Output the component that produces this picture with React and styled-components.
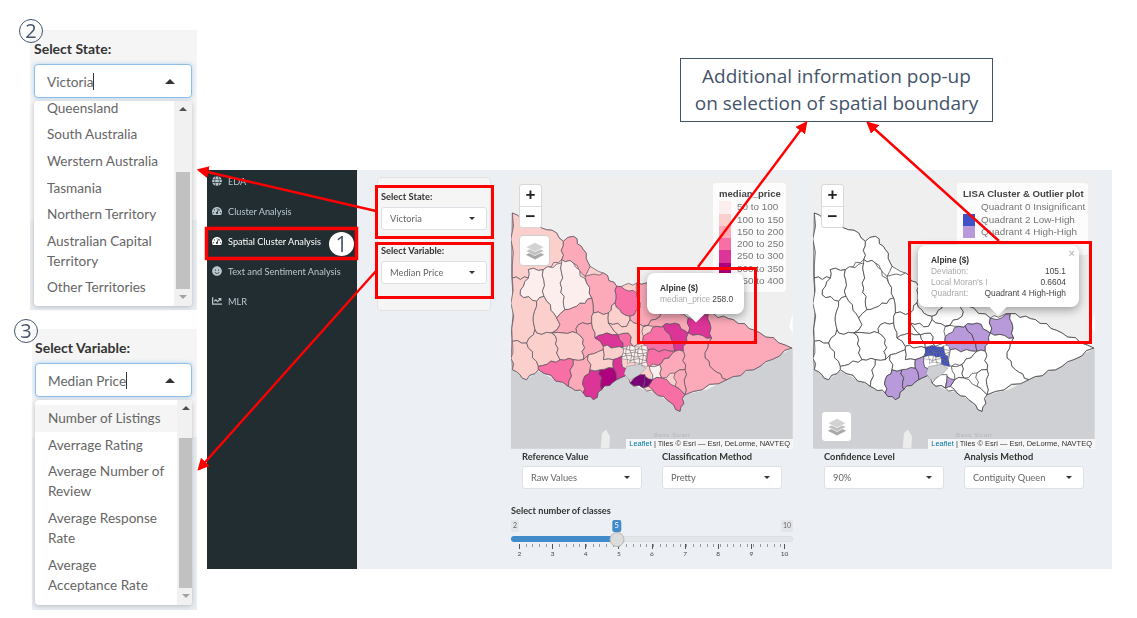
import React from "react";
import styled, { createGlobalStyle } from "styled-components";
import { FaGlobe, FaTachometerAlt, FaSmile, FaChartLine } from "react-icons/fa";

const Global = createGlobalStyle`
  html, body { margin: 0; padding: 0; background: #fff; }
  body { font-family: "Lato", "Noto Sans", sans-serif; }
`;

const Page = styled.div`
  position: relative;
  width: 1137px;
  height: 618px;
  overflow: hidden;
  display: flex;
  background: #fff;
`;
const LeftColumn = styled.div`
  width: 207px;
  flex: none;
  display: flex;
  flex-direction: column;
`;
const RightColumn = styled.div`
  flex: 1;
  display: flex;
  flex-direction: column;
`;
const Callout = styled.section`
  position: relative;
  margin: ${(p) => p.$margin};
  width: ${(p) => p.$width}px;
  height: ${(p) => p.$height}px;
  box-sizing: border-box;
  padding: 10px 5px 0 ${(p) => p.$pad}px;
  background: linear-gradient(#f5f5f5 0 ${(p) => p.$split}px, #e9edf2 ${(p) => p.$split}px);
  filter: blur(0.25px);
`;
const Step = styled.span`
  position: absolute;
  left: ${(p) => p.$x}px;
  top: ${(p) => p.$y}px;
  width: 24px;
  height: 24px;
  box-sizing: border-box;
  border: 1px solid #44546a;
  border-radius: 50%;
  color: #44546a;
  background: transparent;
  font: 20px/22px "Open Sans", sans-serif;
  text-align: center;
`;
const CalloutLabel = styled.div`
  font-size: 14px;
  font-weight: 700;
  line-height: 17px;
  color: #333;
`;
const OpenSelect = styled.div`
  margin-top: 7px;
  height: 34px;
  box-sizing: border-box;
  border: 1px solid #8dbfe9;
  border-radius: 4px;
  background: #fff;
  box-shadow: 0 0 4px rgba(102, 175, 233, 0.5);
  display: flex;
  align-items: center;
  justify-content: space-between;
  padding: 0 16px 0 12px;
  color: #666;
  font-size: 13.6px;
`;
const Cursor = styled.i`
  display: inline-block;
  width: 1px;
  height: 17px;
  background: #333;
  vertical-align: -3px;
`;
const CaretUp = styled.span`
  width: 0;
  height: 0;
  border: 5px solid transparent;
  border-top: 0;
  border-bottom: 5px solid #333;
`;
const Dropdown = styled.div`
  margin-top: 3px;
  height: 205px;
  border-radius: 4px;
  background: #fff;
  box-shadow: 0 1px 5px rgba(0, 0, 0, 0.22);
  display: flex;
  overflow: hidden;
`;
const OptionList = styled.div`
  flex: 1;
  margin-top: ${(p) => p.$offset}px;
`;
const Option = styled.div`
  padding: 3.3px 13px;
  line-height: 20px;
  font-size: 13.6px;
  color: #666;
  white-space: pre;
  background: ${(p) => (p.$active ? "#f5f5f5" : "transparent")};
`;
const Scrollbar = styled.div`
  width: 18px;
  flex: none;
  background: #f1f1f1;
  display: flex;
  flex-direction: column;
  align-items: center;
  padding: 6px 0 7px;
  box-sizing: border-box;
`;
const ScrollThumb = styled.div`
  width: 14px;
  flex: 1;
  margin: ${(p) => p.$top}px 0 6px;
  background: #c1c1c1;
`;
const ScrollUp = styled.span`
  border: 4px solid transparent;
  border-top: 0;
  border-bottom: 4px solid #505050;
`;
const ScrollDown = styled.span`
  border: 4px solid transparent;
  border-bottom: 0;
  border-top: 4px solid #a3a3a3;
`;
const Note = styled.div`
  align-self: flex-start;
  margin: 58px 0 48px 473px;
  width: 313px;
  height: 64px;
  box-sizing: border-box;
  border: 1px solid #44546a;
  display: flex;
  align-items: center;
  justify-content: center;
  text-align: center;
  color: #44546a;
  font: 19px/27px "Open Sans", sans-serif;
  white-space: nowrap;
`;
const Dashboard = styled.div`
  width: 905px;
  height: 399px;
  display: flex;
  overflow: hidden;
  filter: blur(0.3px);
`;
const Sidebar = styled.nav`
  width: 150px;
  flex: none;
  background: #222d32;
  box-sizing: border-box;
  margin: 0;
  overflow: hidden;
`;
const SideItem = styled.div`
  height: 30px;
  display: flex;
  align-items: center;
  gap: 6px;
  padding-left: 5px;
  font-size: 9.2px;
  color: ${(p) => (p.$active ? "#fff" : "#b8c7ce")};
  &:first-child { margin-top: -4px; }
  svg { width: 10px; height: 10px; flex: none; }
`;
const Content = styled.main`
  flex: 1;
  background: #ecf0f5;
  display: flex;
  gap: 20px;
  padding: 7px 17px 0 20px;
  align-items: flex-start;
`;
const Well = styled.aside`
  width: 114px;
  height: 134px;
  flex: none;
  box-sizing: border-box;
  background: #f5f5f5;
  border: 1px solid #e3e3e3;
  border-radius: 4px;
  padding: 13px 3px;
`;
const MapColumn = styled.div`
  width: 282px;
  flex: none;
`;
const WellLabel = styled.div`
  font-size: 9.3px;
  font-weight: 700;
  color: #333;
  line-height: 12px;
  margin-top: ${(p) => p.$gap || 0}px;
`;
const ClosedSelect = styled.div`
  margin-top: ${(p) => p.$top || 4}px;
  height: 23px;
  box-sizing: border-box;
  background: #fff;
  border: 1px solid #dde1e5;
  border-radius: 3px;
  display: flex;
  align-items: center;
  justify-content: space-between;
  padding: 0 11px 0 8px;
  color: #666;
  font-size: 9.3px;
`;
const CaretDown = styled.span`
  border: 3.5px solid transparent;
  border-bottom: 0;
  border-top: 3.5px solid #333;
`;
const MapFrame = styled.div`
  position: relative;
  width: 282px;
  height: 272px;
  overflow: hidden;
  background: #efefef;
  svg.base { display: block; }
`;
const Zoom = styled.div`
  position: absolute;
  left: 8px;
  top: 7px;
  width: 21px;
  background: #fff;
  border: 1px solid #d8d8d8;
  border-radius: 3px;
  font: 700 17px/20px "Liberation Sans", sans-serif;
  color: #222;
  text-align: center;
`;
const ZoomBtn = styled.div`
  height: 20.5px;
  & + & { border-top: 1px solid #ddd; }
`;
const LayersBtn = styled.div`
  position: absolute;
  left: 8px;
  ${(p) => (p.$bottom ? "bottom: 7px;" : "top: 58px;")}
  width: 31px;
  height: 31px;
  box-sizing: border-box;
  background: #fff;
  border: 1px solid #d0d0d0;
  border-radius: 4px;
  display: flex;
  align-items: center;
  justify-content: center;
`;
const Legend = styled.div`
  position: absolute;
  right: 7px;
  top: 6px;
  width: ${(p) => p.$width}px;
  box-sizing: border-box;
  padding: 5px 6px 5px;
  background: rgba(255, 255, 255, 0.82);
  border-radius: 3px;
  font: 9.9px/12.25px "Liberation Sans", sans-serif;
  color: #777;
`;
const LegendTitle = styled.div`
  font-weight: 700;
  font-size: 9.6px;
  color: #444;
  margin-bottom: 1px;
  white-space: nowrap;
`;
const LegendRow = styled.div`
  display: flex;
  gap: 6px;
  white-space: nowrap;
`;
const Swatch = styled.i`
  width: 12px;
  height: 12.25px;
  flex: none;
  background: ${(p) => p.$c};
`;
const Popup = styled.div`
  position: absolute;
  left: ${(p) => p.$x}px;
  top: ${(p) => p.$y}px;
  width: ${(p) => p.$w}px;
  height: ${(p) => p.$h}px;
  box-sizing: border-box;
  padding: 10px 13px 0;
  background: #fff;
  border-radius: 8px;
  box-shadow: 0 3px 10px rgba(0, 0, 0, 0.35);
  font: 8.4px/11px "Liberation Sans", sans-serif;
  color: #444;
  &::after {
    content: "";
    position: absolute;
    left: ${(p) => p.$tip}px;
    bottom: -6px;
    width: 12px;
    height: 12px;
    background: #fff;
    transform: rotate(45deg);
  }
`;
const PopupTitle = styled.div`
  font-weight: 700;
  color: #333;
`;
const PopupRow = styled.div`
  display: flex;
  justify-content: ${(p) => (p.$tight ? "flex-start" : "space-between")};
  gap: 2px;
  white-space: nowrap;
`;
const PopupLabel = styled.span`
  color: #aaa;
`;
const PopupClose = styled.span`
  position: absolute;
  right: 4px;
  top: 2px;
  color: #c3c3c3;
  font: 700 11px/12px "Liberation Sans", sans-serif;
`;
const Attribution = styled.div`
  position: absolute;
  right: 0;
  bottom: 0;
  height: 10px;
  padding: 0 3px;
  background: rgba(255, 255, 255, 0.8);
  font: 7.5px/10px "Liberation Sans", sans-serif;
  color: #333;
  white-space: nowrap;
  b { font-weight: 400; color: #0078a8; }
`;
const Controls = styled.div`
  display: flex;
  gap: 20px;
  margin-top: 1px;
  padding-left: ${(p) => p.$pad}px;
`;
const Control = styled.div`
  width: 120px;
`;
const ControlLabel = styled.div`
  font-size: 9.3px;
  font-weight: 700;
  line-height: 13px;
  color: #333;
`;
const SliderTitle = styled.div`
  margin-top: 16px;
  font-size: 9.2px;
  font-weight: 700;
  line-height: 12px;
  color: #333;
`;
const Slider = styled.div`
  position: relative;
  margin-top: 3px;
`;
const Bounds = styled.div`
  display: flex;
  justify-content: space-between;
  height: 12px;
`;
const Bound = styled.span`
  background: #e3e5e8;
  border-radius: 2px;
  padding: 0 2px;
  font-size: 7px;
  line-height: 11px;
  color: #666;
`;
const Current = styled.span`
  position: absolute;
  top: 0;
  transform: translateX(-50%);
  background: #428bca;
  border-radius: 2px;
  padding: 0 2.5px;
  color: #fff;
  font-size: 7.5px;
  line-height: 12px;
`;
const Track = styled.div`
  position: relative;
  margin-top: 4px;
  height: 6px;
  border-radius: 3px;
  background: #e4e6e9;
  border: 1px solid #dcdfe3;
  box-sizing: border-box;
`;
const Fill = styled.div`
  position: absolute;
  left: -1px;
  top: -1px;
  bottom: -1px;
  background: #428bca;
  border-radius: 3px 0 0 3px;
`;
const Handle = styled.div`
  position: absolute;
  top: -5px;
  width: 15px;
  height: 15px;
  transform: translateX(-50%);
  background: #dcdcdc;
  border: 1px solid #b5b5b5;
  border-radius: 50%;
  box-sizing: border-box;
`;
const Scale = styled.div`
  display: flex;
  justify-content: space-between;
  margin: 2px 4px 0;
  background: repeating-linear-gradient(90deg, #9a9a9a 0 1px, transparent 1px 6.7px) 4px 0 / calc(100% - 8px) 3px no-repeat;
`;
const Tick = styled.div`
  width: 9px;
  text-align: center;
  font-size: 6.5px;
  line-height: 9px;
  color: #444;
  &::before {
    content: "";
    display: block;
    width: 1px;
    height: 5px;
    margin: 0 auto 0;
    background: #555;
  }
`;
const Overlay = styled.svg`
  position: absolute;
  left: 0;
  top: 0;
  pointer-events: none;
`;
const SidebarBadge = styled(Step)`
  border: none;
  background: #fff;
  font-size: 21px;
  line-height: 24px;
  width: 25px;
`;

const RDPU = ["#fdeeee", "#fbd0cc", "#fcaab9", "#f76fa5", "#dd3497", "#ae017e", "#7a0177"];
const Q4 = "#b899d9";
const Q2 = "#3f50c8";

const LAND =
  "457,130 500,150 545,175 590,190 610,215 640,200 670,240 690,290 730,310 770,350 830,340 860,340 900,400 985,445 1045,432 1120,450 1200,490 1295,535 1200,590 1100,630 975,675 960,725 920,690 885,670 850,655 810,640 805,610 770,630 725,660 700,690 670,670 625,650 535,600 500,630 457,600";

const REGIONS = [
  { p: "457,130 500,150 545,175 590,190 610,215 605,270 550,300 505,300 505,325 457,325", c: 1 },
  { p: "610,215 640,200 670,240 690,290 675,320 640,280 605,270", c: 2 },
  { p: "505,300 550,300 552,380 530,395 480,375 490,350 505,325", c: 0 },
  { p: "550,300 605,280 605,355 615,420 590,445 560,395 552,380", c: 0 },
  { p: "605,280 605,270 640,280 680,340 695,385 650,410 615,420 605,355", c: 0 },
  { p: "675,320 730,310 770,350 765,400 745,430 700,430 695,385 680,340", c: 2 },
  { p: "770,350 830,370 840,415 810,440 785,430 765,400", c: 3 },
  { p: "745,430 765,400 785,430 810,440 810,450 800,470 745,460", c: 1 },
  { p: "830,370 830,340 860,340 900,400 900,440 850,470 810,450 810,440 840,415", c: 2 },
  { p: "457,325 505,325 490,350 480,375 530,395 520,440 525,480 500,520 457,515", c: 1 },
  { p: "530,395 552,380 560,395 590,445 600,465 575,490 530,490 525,480 520,440", c: 1 },
  { p: "615,420 650,410 695,385 700,430 695,440 695,460 655,465 650,490 610,490 575,490 600,465 590,445", c: 2 },
  { p: "457,515 500,520 535,590 535,600 500,630 457,600", c: 1 },
  { p: "500,520 525,480 530,490 575,490 590,510 590,550 600,570 535,590", c: 1 },
  { p: "590,510 575,490 610,490 650,490 670,510 670,570 640,570 600,570 590,550", c: 1 },
  { p: "535,590 600,570 640,570 625,650 535,600", c: 3 },
  { p: "640,570 670,570 685,555 690,600 670,630 670,670 625,650", c: 2 },
  { p: "670,630 690,600 720,600 725,660 700,690 670,670", c: 4, l: Q4 },
  { p: "720,600 760,595 770,620 770,630 725,660", c: 5, l: Q4 },
  { p: "655,465 695,460 705,505 730,530 730,540 685,555 670,570 670,510 650,490", c: 2 },
  { p: "695,440 700,430 745,430 745,460 775,495 740,490 705,505 695,460", c: 1 },
  { p: "705,505 740,490 775,495 790,535 730,530", c: 4 },
  { p: "775,495 805,490 820,530 790,535", c: 3 },
  { p: "730,530 790,535 785,560 760,570 730,570 730,540", c: 1 },
  { p: "685,555 730,540 730,570 760,570 760,595 720,600 690,600", c: 1 },
  { p: "760,570 785,560 785,580 805,610 770,630 770,620 760,595", c: 4, l: Q4 },
  { p: "745,460 800,470 810,450 850,470 850,500 848,520 820,530 805,490 775,495", c: 1 },
  { p: "850,500 890,470 910,470 935,510 945,545 865,540 848,520", c: 3, l: Q4 },
  { p: "890,470 945,460 985,490 970,545 945,545 935,510 910,470", c: 4, l: Q4 },
  { p: "900,400 985,445 985,490 945,460 890,470 850,470 900,440", c: 2 },
  { p: "985,445 1005,450 1045,432 1055,505 985,490", c: 4, l: Q4 },
  { p: "1045,432 1120,450 1200,490 1295,535 1200,590 1100,630 1060,600 1035,565 1045,520 1055,505", c: 2 },
  { p: "985,490 1055,505 1045,520 1035,565 1060,600 1100,630 975,675 975,600 970,545", c: 2 },
  { p: "865,540 945,545 905,580 868,590 860,585", c: 3 },
  { p: "905,580 945,545 970,545 975,600 945,610 905,625 900,585", c: 2 },
  { p: "868,590 900,585 905,625 878,630", c: 0 },
  { p: "945,610 975,600 975,675 945,650", c: 2 },
  { p: "878,630 905,625 945,650 975,675 960,725 920,690 885,670 865,650", c: 3 },
  { p: "810,640 835,615 855,615 850,655", c: 6 },
  { p: "855,620 878,630 865,650 850,655", c: 6, l: Q4 },
];

// Subdivide each edge with a small offset seeded by the edge itself, so that
// neighbouring regions keep sharing a boundary and the lines look like rivers.
function wiggle(text) {
  const pts = text.split(" ").map((s) => s.split(",").map((n) => parseFloat(n)));
  const out = [];
  pts.forEach((a, i) => {
    const b = pts[(i + 1) % pts.length];
    out.push(a);
    const swap = a[0] > b[0] || (a[0] === b[0] && a[1] > b[1]);
    const u = swap ? b : a;
    const v = swap ? a : b;
    const len = Math.hypot(v[0] - u[0], v[1] - u[1]);
    if (len < 18) return;
    const seed = u[0] * 0.37 + u[1] * 0.71 + v[0] * 0.13 + v[1] * 0.53;
    const steps = Math.min(5, Math.floor(len / 12));
    const mid = [];
    for (let k = 1; k < steps; k++) {
      const t = k / steps;
      const n = Math.sin(seed + k * 2.4) * 4.5;
      mid.push([u[0] + (v[0] - u[0]) * t - ((v[1] - u[1]) / len) * n, u[1] + (v[1] - u[1]) * t + ((v[0] - u[0]) / len) * n]);
    }
    if (swap) mid.reverse();
    out.push(...mid);
  });
  return out.map((q) => q.map((n) => n.toFixed(1)).join(",")).join(" ");
}

const SHAPES = REGIONS.map((r) => ({ ...r, p: wiggle(r.p) }));
const LAND_SHAPE = wiggle(LAND);

// Melbourne's many small inner municipalities: an irregular mesh
const node = (i, j) => [
  (788 + i * 12 + Math.sin(i * 2.1 + j * 1.3) * 3).toFixed(1),
  (530 + j * 10 + Math.cos(i * 1.7 + j * 2.3) * 3).toFixed(1),
].join(",");
const CELLS = [];
for (let j = 0; j < 6; j++) {
  for (let i = 0; i < 6; i++) {
    if ((j === 5 && i < 3) || (j >= 4 && i === 0)) continue;
    const blue = (j <= 2 && i <= 4) || (i >= 4 && j >= 3);
    CELLS.push({ p: `${node(i, j)} ${node(i + 1, j)} ${node(i + 1, j + 1)} ${node(i, j + 1)}`, blue });
  }
}

const SEA =
  "453,597 500,630 535,605 625,650 670,670 700,690 725,660 770,630 805,610 790,580 840,575 860,590 875,630 850,650 810,640 850,660 885,670 920,690 960,725 975,675 1040,660 1100,630 1200,590 1298,535 1298,837 453,837";

function VictoriaMap({ lisa }) {
  return (
    <svg className="base" width="282" height="272" viewBox="453 22 846 816">
      <polygon points={SEA} fill="#cfd0d4" />
      <path d="M722 836 726 790 738 780 750 800 748 836Z M1090 836 1100 815 1115 836Z" fill="#ececec" />
      <path d="M1298 430 1288 470 1298 490Z" fill="#fff" />
      <text x="882" y="803" fontFamily="Liberation Sans, sans-serif" fontSize="18" fill="#b5b5b8" letterSpacing="2">
        Bass Strait
      </text>
      <polygon points={LAND_SHAPE} fill={lisa ? "#fff" : RDPU[1]} stroke={lisa ? "#3d3d3d" : "#5c5560"} strokeWidth="2.2" />
      {SHAPES.map((r) => (
        <polygon
          key={r.p}
          points={r.p}
          fill={lisa ? r.l || "#fff" : RDPU[r.c]}
          stroke={lisa ? "#3d3d3d" : "#5c5560"}
          strokeWidth="2.2"
          strokeLinejoin="round"
        />
      ))}
      {CELLS.map((c) => (
        <polygon
          key={c.p}
          points={c.p}
          fill={lisa ? (c.blue ? Q2 : "#fff") : "#fdf1f0"}
          stroke="#555"
          strokeWidth="1.2"
        />
      ))}
      <polygon points="800,590 840,584 858,596 838,616 808,632 792,612" fill="#cfd0d4" stroke="#666" strokeWidth="1" />
    </svg>
  );
}

function LayersIcon() {
  return (
    <svg width="20" height="20" viewBox="0 0 26 26">
      <path d="M13 12 25 18 13 24 1 18Z" fill="#a9a9a9" />
      <path d="M13 7 25 13 13 19 1 13Z" fill="#c0c0c0" stroke="#fff" strokeWidth=".8" />
      <path d="M13 2 25 8 13 14 1 8Z" fill="#d2d2d2" stroke="#fff" strokeWidth=".8" />
    </svg>
  );
}

const MapControls = ({ bottom }) => (
  <>
    <Zoom>
      <ZoomBtn>+</ZoomBtn>
      <ZoomBtn>−</ZoomBtn>
    </Zoom>
    <LayersBtn $bottom={bottom}>
      <LayersIcon />
    </LayersBtn>
    <Attribution>
      <b>Leaflet</b> | Tiles © Esri — Esri, DeLorme, NAVTEQ
    </Attribution>
  </>
);

const Select = ({ label, value }) => (
  <Control>
    <ControlLabel>{label}</ControlLabel>
    <ClosedSelect $top={3}>
      {value}
      <CaretDown />
    </ClosedSelect>
  </Control>
);

const PRICE = ["50 to 100", "100 to 150", "150 to 200", "200 to 250", "250 to 300", "300 to 350", "350 to 400"];
const TICKS = [2, 3, 4, 5, 6, 7, 8, 9, 10];

const Box = ({ x, y, w, h, t = 3 }) => <rect x={x} y={y} width={w} height={h} fill="none" stroke="#f00" strokeWidth={t} />;
const Arrow = ({ d }) => <line {...d} stroke="#f00" strokeWidth="2.4" markerEnd="url(#head)" />;

export default function App() {
  const percent = 37.5;
  return (
    <Page>
      <Global />
      <LeftColumn>
        <Callout $margin="30px 0 0 30px" $width={167} $height={280} $pad={4} $split={190}>
          <Step $x={-11} $y={-11}>2</Step>
          <CalloutLabel>Select State:</CalloutLabel>
          <OpenSelect>
            <span>Victoria<Cursor /></span>
            <CaretUp />
          </OpenSelect>
          <Dropdown>
            <OptionList $offset={-6.5}>
              {["Queensland", "South Australia", "Werstern Australia", "Tasmania", "Northern Territory", "Australian Capital\nTerritory", "Other Territories"].map((o) => (
                <Option key={o}>{o}</Option>
              ))}
            </OptionList>
            <Scrollbar>
              <ScrollUp />
              <ScrollThumb $top={61} />
              <ScrollDown />
            </Scrollbar>
          </Dropdown>
        </Callout>
        <Callout $margin="19px 0 0 32px" $width={165} $height={281} $pad={3} $split={108}>
          <Step $x={-18} $y={-10}>3</Step>
          <CalloutLabel>Select Variable:</CalloutLabel>
          <OpenSelect>
            <span>Median Price<Cursor /></span>
            <CaretUp />
          </OpenSelect>
          <Dropdown>
            <OptionList $offset={5}>
              <Option $active>Number of Listings</Option>
              {["Averrage Rating", "Average Number of\nReview", "Average Response\nRate", "Average\nAcceptance Rate"].map((o) => (
                <Option key={o}>{o}</Option>
              ))}
            </OptionList>
            <Scrollbar>
              <ScrollUp />
              <ScrollThumb $top={28} />
              <ScrollDown />
            </Scrollbar>
          </Dropdown>
        </Callout>
      </LeftColumn>
      <RightColumn>
        <Note>
          Additional information pop-up
          <br />
          on selection of spatial boundary
        </Note>
        <Dashboard>
          <Sidebar>
            <SideItem><FaGlobe />EDA</SideItem>
            <SideItem><FaTachometerAlt />Cluster Analysis</SideItem>
            <SideItem $active><FaTachometerAlt />Spatial Cluster Analysis</SideItem>
            <SideItem><FaSmile />Text and Sentiment Analysis</SideItem>
            <SideItem><FaChartLine />MLR</SideItem>
          </Sidebar>
          <Content>
            <Well>
              <WellLabel>Select State:</WellLabel>
              <ClosedSelect>Victoria<CaretDown /></ClosedSelect>
              <WellLabel $gap={15}>Select Variable:</WellLabel>
              <ClosedSelect>Median Price<CaretDown /></ClosedSelect>
            </Well>
            <MapColumn>
              <MapFrame>
                <VictoriaMap />
                <MapControls />
                <Legend $width={73}>
                  <LegendTitle>median_price</LegendTitle>
                  {PRICE.map((t, i) => (
                    <LegendRow key={t}><Swatch $c={RDPU[i]} />{t}</LegendRow>
                  ))}
                </Legend>
                <Popup $x={136} $y={96} $w={97} $h={41} $tip={43}>
                  <PopupTitle>Alpine ($)</PopupTitle>
                  <PopupRow $tight><PopupLabel>median_price</PopupLabel>258.0</PopupRow>
                </Popup>
              </MapFrame>
              <Controls $pad={11}>
                <Select label="Reference Value" value="Raw Values" />
                <Select label="Classification Method" value="Pretty" />
              </Controls>
              <SliderTitle>Select number of classes</SliderTitle>
              <Slider>
                <Bounds><Bound>2</Bound><Bound>10</Bound></Bounds>
                <Current style={{ left: `${percent}%` }}>5</Current>
                <Track>
                  <Fill style={{ width: `${percent}%` }} />
                  <Handle style={{ left: `${percent}%` }} />
                </Track>
                <Scale>
                  {TICKS.map((t) => <Tick key={t}>{t}</Tick>)}
                </Scale>
              </Slider>
            </MapColumn>
            <MapColumn>
              <MapFrame>
                <VictoriaMap lisa />
                <MapControls bottom />
                <Legend $width={131}>
                  <LegendTitle>LISA Cluster &amp; Outlier plot</LegendTitle>
                  <LegendRow><Swatch $c="transparent" />Quadrant 0 Insignificant</LegendRow>
                  <LegendRow><Swatch $c={Q2} />Quadrant 2 Low-High</LegendRow>
                  <LegendRow><Swatch $c={Q4} />Quadrant 4 High-High</LegendRow>
                  <LegendRow>&nbsp;</LegendRow>
                </Legend>
                <Popup $x={105} $y={68} $w={161} $h={62} $tip={74}>
                  <PopupClose>×</PopupClose>
                  <PopupTitle>Alpine ($)</PopupTitle>
                  <PopupRow><PopupLabel>Deviation:</PopupLabel>105.1</PopupRow>
                  <PopupRow><PopupLabel>Local Moran's I</PopupLabel>0.6604</PopupRow>
                  <PopupRow><PopupLabel>Quadrant:</PopupLabel>Quadrant 4 High-High</PopupRow>
                </Popup>
              </MapFrame>
              <Controls $pad={11}>
                <Select label="Confidence Level" value="90%" />
                <Select label="Analysis Method" value="Contiguity Queen" />
              </Controls>
            </MapColumn>
          </Content>
        </Dashboard>
      </RightColumn>
      <Overlay width="1137" height="618">
        <defs>
          <marker id="head" markerWidth="5" markerHeight="5" refX="4" refY="2.5" orient="auto" markerUnits="strokeWidth">
            <path d="M0 0 5 2.5 0 5Z" fill="#f00" />
          </marker>
        </defs>
        <Box x={376.5} y={186.5} w={116} h={51} />
        <Box x={376.5} y={243.5} w={116} h={54} />
        <Box x={206.5} y={228.5} w={150} h={30} t={3.5} />
        <Box x={638.5} y={268.5} w={117} h={74} />
        <Box x={909.5} y={242.5} w={181} h={100} />
        <Arrow d={{ x1: 376, y1: 211, x2: 199, y2: 170 }} />
        <Arrow d={{ x1: 376, y1: 271, x2: 199, y2: 469 }} />
        <Arrow d={{ x1: 698, y1: 267, x2: 806, y2: 123 }} />
        <Arrow d={{ x1: 999, y1: 241, x2: 868, y2: 123 }} />
      </Overlay>
      <SidebarBadge $x={329} $y={232}>1</SidebarBadge>
    </Page>
  );
}
